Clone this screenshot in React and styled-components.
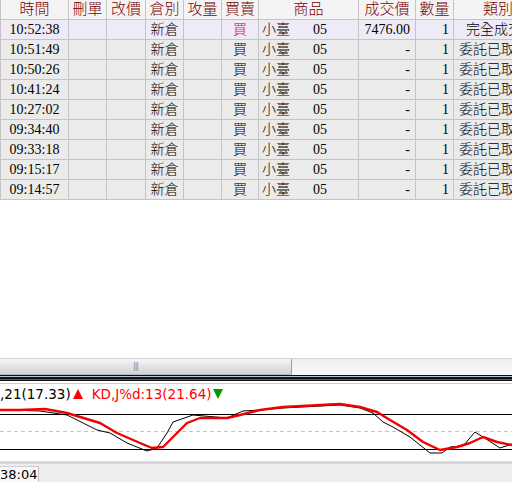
import React from "react";
import styled, { createGlobalStyle } from "styled-components";

const GlobalStyle = createGlobalStyle`
  html, body {
    margin: 0;
    padding: 0;
    background: #ffffff;
  }
  #root {
    width: 512px;
    height: 482px;
    overflow: hidden;
  }
`;

const COLS = "68px 38px 39px 38px 38px 37px 100px 57px 38px 80px";

const headers = ["時間", "刪單", "改價", "倉別", "攻量", "買賣", "商品", "成交價", "數量", "類別"];

const orders = [
  { time: "10:52:38", price: "7476.00", kind: "完全成交", active: true },
  { time: "10:51:49", price: "-", kind: "委託已取消" },
  { time: "10:50:26", price: "-", kind: "委託已取消" },
  { time: "10:41:24", price: "-", kind: "委託已取消" },
  { time: "10:27:02", price: "-", kind: "委託已取消" },
  { time: "09:34:40", price: "-", kind: "委託已取消" },
  { time: "09:33:18", price: "-", kind: "委託已取消" },
  { time: "09:15:17", price: "-", kind: "委託已取消" },
  { time: "09:14:57", price: "-", kind: "委託已取消" },
];

// chart points, y already relative to the plot top (402)
const redLine = [
  [0, 8], [20, 8], [45, 7], [67, 11], [100, 21], [117, 31], [140, 41], [152, 46],
  [163, 45], [173, 35], [187, 21], [200, 16], [227, 16], [240, 13], [260, 8],
  [283, 5], [340, 2], [360, 5], [377, 10], [390, 18], [407, 28], [423, 40],
  [440, 48], [457, 45], [470, 41], [483, 35], [497, 40], [512, 43],
];

const blackLine = [
  [0, 8], [10, 8], [40, 9], [67, 13], [97, 28], [110, 31], [127, 41], [147, 49],
  [157, 46], [167, 31], [173, 20], [193, 13], [227, 16], [243, 9], [260, 8],
  [283, 6], [340, 3], [360, 6], [373, 11], [383, 20], [393, 25], [410, 35],
  [430, 51], [442, 51], [450, 45], [463, 44], [475, 30], [483, 35], [500, 46],
  [512, 42],
];

const toPoints = (pts) => pts.map(([x, y]) => `${x},${y}`).join(" ");

function App() {
  return (
    <>
      <GlobalStyle />
      <Screen>
        <TablePanel>
          <Grid>
            {headers.map((h, i) => (
              <HeadCell key={h} $align={i === 9 ? "left" : "center"} $pad={i === 9 ? 29 : 0}>
                {h}
              </HeadCell>
            ))}
            {orders.map((o) => (
              <React.Fragment key={o.time}>
                <Cell $active={o.active}>{o.time}</Cell>
                <Cell $active={o.active} />
                <Cell $active={o.active} />
                <Cell $active={o.active}>新倉</Cell>
                <Cell $active={o.active} />
                <Cell $active={o.active} $red={o.active}>買</Cell>
                <Cell $active={o.active} $align="left" $pad={3}>
                  <Product>小臺</Product>
                  <span>05</span>
                </Cell>
                <Cell $active={o.active} $align="right" $pad={5}>{o.price}</Cell>
                <Cell $active={o.active} $align="right" $pad={4}>1</Cell>
                <Cell $active={o.active} $align="left" $pad={o.active ? 12 : 5}>{o.kind}</Cell>
              </React.Fragment>
            ))}
          </Grid>
        </TablePanel>

        <ScrollBar>
          <Thumb>
            <Grip>|||</Grip>
          </Thumb>
        </ScrollBar>
        <Splitter />

        <ChartPanel>
          <Legend>
            <span>,21(17.33)</span>
            <Triangle $up />
            <RedText>KD,J%d:13(21.64)</RedText>
            <Triangle />
          </Legend>
          <Plot viewBox="0 0 512 59" width="512" height="59">
            <line x1="0" y1="12.5" x2="512" y2="12.5" stroke="#000" strokeWidth="1.2" />
            <line x1="0" y1="29.5" x2="512" y2="29.5" stroke="#c4c4c4" strokeWidth="1" strokeDasharray="4 3" />
            <line x1="0" y1="47.5" x2="512" y2="47.5" stroke="#000" strokeWidth="1.2" />
            <polyline points={toPoints(blackLine)} fill="none" stroke="#000" strokeWidth="1" />
            <polyline points={toPoints(redLine)} fill="none" stroke="#f00000" strokeWidth="2.4" strokeLinejoin="round" />
          </Plot>
        </ChartPanel>

        <StatusBar>
          <TimeBox>38:04</TimeBox>
        </StatusBar>
      </Screen>
    </>
  );
}

export default App;

const Screen = styled.div`
  width: 512px;
  height: 482px;
  display: flex;
  flex-direction: column;
  overflow: hidden;
  background: #ffffff;
`;

const TablePanel = styled.div`
  height: 358px;
  flex: none;
  overflow: hidden;
  background: #ffffff;
`;

const Grid = styled.div`
  display: grid;
  grid-template-columns: ${COLS};
  grid-auto-rows: 20px;
  width: 535px;
  border-left: 1px solid #c4c4c4;
`;

const HeadCell = styled.div`
  box-sizing: border-box;
  background: #f4f4f4;
  color: #7a0000;
  font-family: "Liberation Serif", "Noto Sans CJK TC", serif;
  font-size: 15px;
  font-weight: 300;
  line-height: 19px;
  text-align: ${(p) => p.$align};
  padding-left: ${(p) => p.$pad}px;
  border-right: 1px solid #c4c4c4;
  border-bottom: 1px solid #c4c4c4;
  white-space: nowrap;
  overflow: hidden;
`;

const Cell = styled.div`
  box-sizing: border-box;
  background: ${(p) => (p.$active ? "#eeeaf6" : "#ebebeb")};
  color: ${(p) => (p.$red ? "#ff0000" : "#000000")};
  font-family: "Liberation Serif", "Noto Sans CJK TC", serif;
  font-size: 14px;
  font-weight: 300;
  line-height: 20px;
  text-align: ${(p) => p.$align || "center"};
  padding: 0 ${(p) => (p.$align === "right" ? p.$pad : 0)}px 0
    ${(p) => (p.$align === "left" ? p.$pad : 0)}px;
  border-right: 1px solid #c4c4c4;
  border-bottom: 1px solid #c4c4c4;
  white-space: nowrap;
  overflow: hidden;
`;

const Product = styled.span`
  display: inline-block;
  width: 51px;
`;

const ScrollBar = styled.div`
  height: 17px;
  flex: none;
  box-sizing: border-box;
  border-top: 1px solid #d6d6d6;
  background: linear-gradient(#eeeeee, #fafafa);
  display: flex;
`;

const Thumb = styled.div`
  width: 292px;
  box-sizing: border-box;
  background: linear-gradient(#f6f6f6, #e2e2e2 55%, #d2d2d2);
  border-right: 1px solid #9c9c9c;
  border-bottom: 1px solid #b8b8b8;
  display: flex;
  align-items: center;
  justify-content: center;
`;

const Grip = styled.span`
  font-family: "DejaVu Sans", sans-serif;
  font-size: 8px;
  letter-spacing: -1px;
  color: #8a8a8a;
  margin-left: -20px;
`;

const Splitter = styled.div`
  height: 10px;
  flex: none;
  background: linear-gradient(
    #101018 0 1px,
    #b8c8e8 1px 2px,
    #101010 2px 4px,
    #5a5a5a 4px 5px,
    #151515 5px 6px,
    #ffffff 6px 8px,
    #c8c8c8 8px 9px,
    #ffffff 9px 10px
  );
`;

const ChartPanel = styled.div`
  height: 76px;
  flex: none;
  display: flex;
  flex-direction: column;
  background: #ffffff;
  overflow: hidden;
`;

const Legend = styled.div`
  height: 17px;
  display: flex;
  align-items: center;
  font-family: "DejaVu Sans", "Liberation Sans", sans-serif;
  font-size: 13.5px;
  color: #000000;
  white-space: nowrap;
`;

const Triangle = styled.span`
  width: 0;
  height: 0;
  border-left: 5px solid transparent;
  border-right: 5px solid transparent;
  ${(p) =>
    p.$up
      ? "border-bottom: 10px solid #ff0000; margin: 0 9px 0 2px;"
      : "border-top: 10px solid #009a00; margin-left: 2px;"}
`;

const RedText = styled.span`
  color: #ff0000;
`;

const Plot = styled.svg`
  display: block;
`;

const StatusBar = styled.div`
  flex: 1;
  box-sizing: border-box;
  border-top: 3px solid #d8d8d8;
  padding-top: 2px;
  background: #eeeeee;
  display: flex;
`;

const TimeBox = styled.div`
  box-sizing: border-box;
  width: 39px;
  border-top: 1px solid #d0d0d0;
  border-right: 1px solid #c0c0c0;
  background: #f8f8f8;
  font-family: "DejaVu Sans", "Liberation Sans", sans-serif;
  font-size: 13px;
  line-height: 15px;
  color: #000000;
  overflow: hidden;
`;
